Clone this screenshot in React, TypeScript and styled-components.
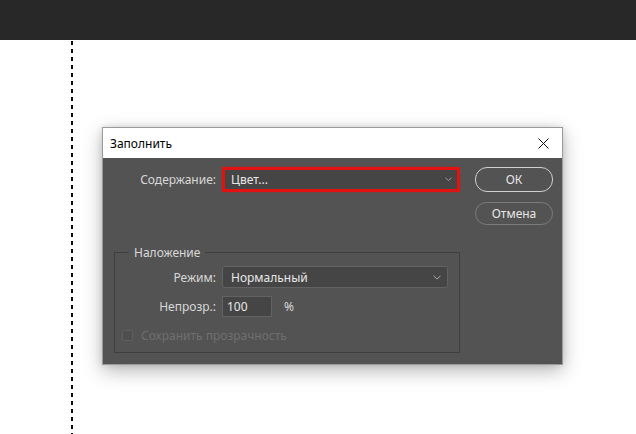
import styled, { createGlobalStyle } from 'styled-components';

const GlobalStyle = createGlobalStyle`
  html, body {
    margin: 0;
    padding: 0;
    background: #fff;
    font-family: "Noto Sans", "Liberation Sans", sans-serif;
    font-size: 12px;
  }
`;

const Page = styled.div`
  width: 636px;
  height: 434px;
  display: flex;
  flex-direction: column;
  overflow: hidden;
`;

const TopBar = styled.div`
  height: 40px;
  background: #282828;
  flex-shrink: 0;
`;

const Canvas = styled.div`
  position: relative;
  flex: 1;
  background: #fff;
`;

const Marquee = styled.div`
  position: absolute;
  left: 71px;
  top: 1px;
  bottom: 0;
  width: 2px;
  background: repeating-linear-gradient(
    to bottom,
    #000 0,
    #000 4px,
    transparent 4px,
    transparent 8px
  );
`;

const Dialog = styled.div`
  position: absolute;
  left: 102px;
  top: 87px;
  width: 459px;
  border: 1px solid #9a9a9a;
  background: #535353;
  box-shadow: 0 6px 18px rgba(0, 0, 0, 0.28), 0 0 6px rgba(0, 0, 0, 0.12);
  display: flex;
  flex-direction: column;
`;

const TitleBar = styled.div`
  height: 30px;
  background: #fff;
  display: flex;
  align-items: center;
  justify-content: space-between;
  padding: 0 9px 0 7px;
  color: #000;
  font-size: 12px;
`;

const CloseButton = styled.button`
  width: 20px;
  height: 20px;
  border: none;
  background: transparent;
  padding: 0;
  display: flex;
  align-items: center;
  justify-content: center;
`;

const Body = styled.div`
  display: flex;
  padding: 9px 9px 11px 11px;
  gap: 15px;
`;

const Main = styled.div`
  display: flex;
  flex-direction: column;
  width: 346px;
`;

const Row = styled.div<{ $labelWidth: number }>`
  display: flex;
  align-items: center;
  gap: 6px;

  & > label {
    width: ${p => p.$labelWidth}px;
    text-align: right;
    color: #d8d8d8;
    font-size: 12px;
    flex-shrink: 0;
  }
`;

const Select = styled.div<{ $width: number; $height: number; $highlight?: boolean }>`
  box-sizing: border-box;
  width: ${p => p.$width}px;
  height: ${p => p.$height}px;
  background: #454545;
  border: ${p => (p.$highlight ? '3px solid #e31212' : '1px solid #626262')};
  border-radius: ${p => (p.$highlight ? '1px' : '3px')};
  box-shadow: ${p => (p.$highlight ? '0 0 2px rgba(230, 20, 20, 0.6)' : 'none')};
  display: flex;
  align-items: center;
  justify-content: space-between;
  padding: ${p => (p.$highlight ? '0 5px 0 6px' : '0 6px 0 8px')};
  color: #e8e8e8;
  font-size: 12px;
`;

const NumberField = styled.div`
  box-sizing: border-box;
  width: 50px;
  height: 21px;
  background: #454545;
  border: 1px solid #626262;
  display: flex;
  align-items: center;
  padding: 0 4px;
  color: #e8e8e8;
  font-size: 12px;
`;

const Unit = styled.span`
  color: #d8d8d8;
  margin-left: 6px;
`;

const Group = styled.fieldset`
  margin: 52px 0 0 0;
  padding: 5px 10px 8px 0;
  border: 1px solid #3f3f3f;
  display: flex;
  flex-direction: column;
  gap: 8px;

  & > legend {
    margin-left: 14px;
    padding: 0 5px;
    color: #d8d8d8;
    font-size: 12px;
  }
`;

const CheckRow = styled.div`
  display: flex;
  align-items: center;
  gap: 8px;
  padding-left: 7px;
  margin-top: 2px;
  color: #6f6f6f;
  font-size: 12px;
`;

const CheckBox = styled.span`
  box-sizing: border-box;
  width: 11px;
  height: 11px;
  border: 1px solid #5f5f5f;
  background: #4e4e4e;
  border-radius: 2px;
`;

const Buttons = styled.div`
  display: flex;
  flex-direction: column;
  gap: 10px;
`;

const PillButton = styled.button<{ $primary?: boolean }>`
  box-sizing: border-box;
  width: 78px;
  height: ${p => (p.$primary ? 25 : 23)}px;
  border-radius: 12px;
  border: ${p => (p.$primary ? '1.5px solid #d0d0d0' : '1px solid #7c7c7c')};
  background: transparent;
  color: #e6e6e6;
  font-family: inherit;
  font-size: 12px;
  padding: 0;
`;

const Chevron = ({ size }: { size: number }) => (
  <svg width={size} height={size / 2 + 1} viewBox="0 0 8 5">
    <path d="M0.5 0.8 L4 4 L7.5 0.8" fill="none" stroke="#a8a8a8" strokeWidth="1" />
  </svg>
);

export default function App() {
  return (
    <>
      <GlobalStyle />
      <Page>
        <TopBar />
        <Canvas>
          <Marquee />
          <Dialog>
            <TitleBar>
              <span>Заполнить</span>
              <CloseButton>
                <svg width="11" height="11" viewBox="0 0 11 11">
                  <path d="M0.5 0.5 L10.5 10.5 M10.5 0.5 L0.5 10.5" stroke="#111" strokeWidth="1" />
                </svg>
              </CloseButton>
            </TitleBar>
            <Body>
              <Main>
                <Row $labelWidth={102}>
                  <label>Содержание:</label>
                  <Select $width={238} $height={25} $highlight>
                    <span>Цвет...</span>
                    <Chevron size={7} />
                  </Select>
                </Row>
                <Group>
                  <legend>Наложение</legend>
                  <Row $labelWidth={101}>
                    <label>Режим:</label>
                    <Select $width={226} $height={22}>
                      <span>Нормальный</span>
                      <Chevron size={8} />
                    </Select>
                  </Row>
                  <Row $labelWidth={101}>
                    <label>Непрозр.:</label>
                    <NumberField>100</NumberField>
                    <Unit>%</Unit>
                  </Row>
                  <CheckRow>
                    <CheckBox />
                    <span>Сохранить прозрачность</span>
                  </CheckRow>
                </Group>
              </Main>
              <Buttons>
                <PillButton $primary>ОК</PillButton>
                <PillButton>Отмена</PillButton>
              </Buttons>
            </Body>
          </Dialog>
        </Canvas>
      </Page>
    </>
  );
}
